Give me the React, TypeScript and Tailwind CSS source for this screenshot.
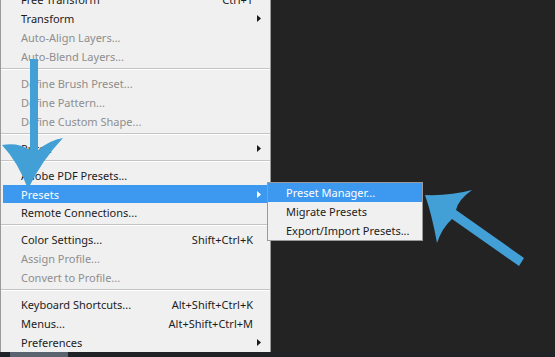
import React from "react";

type Item =
  | { sep: true }
  | { label: string; shortcut?: string; sub?: boolean; disabled?: boolean; active?: boolean };

const items: Item[] = [
  { label: "Free Transform", shortcut: "Ctrl+T" },
  { label: "Transform", sub: true },
  { label: "Auto-Align Layers...", disabled: true },
  { label: "Auto-Blend Layers...", disabled: true },
  { sep: true },
  { label: "Define Brush Preset...", disabled: true },
  { label: "Define Pattern...", disabled: true },
  { label: "Define Custom Shape...", disabled: true },
  { sep: true },
  { label: "Purge", sub: true },
  { sep: true },
  { label: "Adobe PDF Presets..." },
  { label: "Presets", sub: true, active: true },
  { label: "Remote Connections..." },
  { sep: true },
  { label: "Color Settings...", shortcut: "Shift+Ctrl+K" },
  { label: "Assign Profile...", disabled: true },
  { label: "Convert to Profile...", disabled: true },
  { sep: true },
  { label: "Keyboard Shortcuts...", shortcut: "Alt+Shift+Ctrl+K" },
  { label: "Menus...", shortcut: "Alt+Shift+Ctrl+M" },
  { label: "Preferences", sub: true },
];

function Caret({ white }: { white?: boolean }) {
  return (
    <svg width="4" height="7" viewBox="0 0 4 7">
      <path d="M0 0 L4 3.5 L0 7 Z" fill={white ? "#ffffff" : "#1a1a1a"} />
    </svg>
  );
}

export default function App() {
  return (
    <div
      className="relative w-[555px] h-[357px] overflow-hidden bg-[#232323] flex flex-col"
      style={{ fontFamily: '"Noto Sans", "Open Sans", sans-serif' }}
    >
      <div className="h-[352px] overflow-hidden flex">
        <div className="w-[271px] -mt-[11px] bg-[#f0f0f0] border-l border-r border-[#9a9a9a] flex flex-col pt-[1px] text-[11px] leading-none">
          {items.map((it, i) => {
            if ("sep" in it) {
              return (
                <div key={i} className="h-[8px] pt-[2px]">
                  <div className="h-[1px] bg-[#c4c4c4]" />
                  <div className="h-[1px] bg-[#ffffff]" />
                </div>
              );
            }
            const color = it.active
              ? "text-white"
              : it.disabled
              ? "text-[#8e8e8e]"
              : "text-[#1c1c1c]";
            return (
              <div
                key={i}
                className={`h-[19px] flex items-center ${
                  it.active ? "bg-[#3d98ef] ml-[2px] mr-[3px] pl-[18px]" : "pl-[20px]"
                } ${color}`}
              >
                <span className="flex-1 whitespace-nowrap">{it.label}</span>
                {it.shortcut && <span className="whitespace-nowrap">{it.shortcut}</span>}
                <span className={`${it.active ? "w-[14px]" : "w-[17px]"} pl-[4px] flex items-center`}>
                  {it.sub && <Caret white={it.active} />}
                </span>
              </div>
            );
          })}
        </div>
        <div className="flex-1" />
      </div>
      <div className="h-[5px] bg-[#1f2328] flex">
        <div className="w-[10px]" />
        <div className="w-[58px] bg-[#5a6470]" />
      </div>

      {/* Submenu */}
      <div className="absolute left-[267px] top-[182px] w-[156px] bg-[#f0f0f0] border border-[#9a9a9a] flex flex-col text-[11px] leading-none text-[#1c1c1c]">
        <div className="h-[19px] flex items-center pl-[18px] bg-[#3d98ef] text-white">Preset Manager...</div>
        <div className="h-[19px] flex items-center pl-[18px]">Migrate Presets</div>
        <div className="h-[19px] flex items-center pl-[18px]">Export/Import Presets...</div>
      </div>

      {/* Arrows overlay */}
      <svg className="absolute left-0 top-0 pointer-events-none" width="555" height="357" viewBox="0 0 555 357">
        <path
          d="M2 145 Q18 142 30 150 L30 59 L38 59 L38 150 Q50 140 63 138 Q42 160 28 189 Q18 162 2 145 Z"
          fill="#42a0d6"
        />
        <path
          d="M425 195 Q450 196 472 190 Q458 200 456 210 L524 258 L519 266 L452 219 Q442 228 437 243 Q432 215 425 195 Z"
          fill="#42a0d6"
        />
      </svg>
    </div>
  );
}
